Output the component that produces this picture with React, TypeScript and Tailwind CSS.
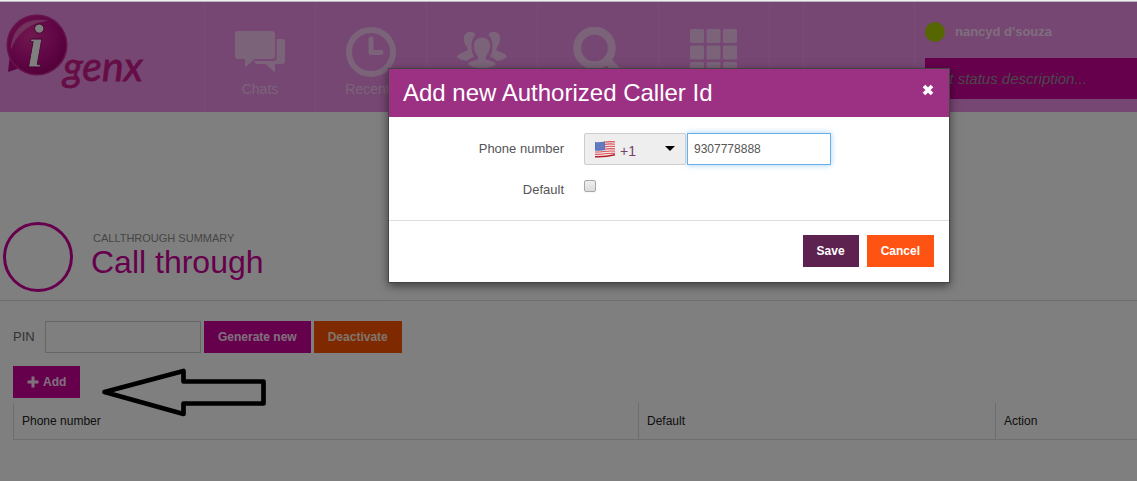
import React, { useState } from "react";

function Logo() {
  return (
    <svg className="block h-[90px] w-[150px] overflow-visible" viewBox="0 0 150 90" role="img" aria-label="i genx">
      <defs>
        <radialGradient id="bubble" cx="0.4" cy="0.35" r="0.7">
          <stop offset="0" stopColor="#e0309c" />
          <stop offset="0.6" stopColor="#c20c8c" />
          <stop offset="1" stopColor="#9e0070" />
        </radialGradient>
      </defs>
      <path d="M2 60 L4 42 A30 30 0 0 1 20 54 Z" fill="#b80a86" />
      <circle cx="31" cy="33" r="29.800" fill="url(#bubble)" stroke="#d02698" strokeWidth="1.500" />
      <path d="M5 38 C5 16 22 4 43 9 C26 10 12 19 5 38Z" fill="#f4a0d8" opacity="0.55" />
      <text x="21" y="55" fontFamily="Liberation Serif, serif" fontSize="62" fontWeight="700" fontStyle="italic" fill="#fff" stroke="#8a0064" strokeWidth="0.800">i</text>
      <text x="57" y="69" fontFamily="Lato, sans-serif" fontSize="41" fontWeight="400" fontStyle="italic" fill="#cc1a8c" stroke="#cc1a8c" strokeWidth="0.800">genx</text>
    </svg>
  );
}

function ChatsIcon() {
  return (
    <svg className="h-[50px] w-[50px]" viewBox="0 0 50 50" fill="currentColor" aria-hidden="true">
      <path d="M3 4H37Q40 4 40 7V29Q40 32 37 32H20L10 40.500V32H3Q0 32 0 29V7Q0 4 3 4Z" />
      <path d="M41.700 12H47Q50 12 50 15V34Q50 37 47 37H40V45.500L30.500 37H22Q19.500 36.500 19.500 34H38.500Q41.700 34 41.700 31Z" />
    </svg>
  );
}

function ClockIcon() {
  return (
    <svg className="h-[50px] w-[50px]" viewBox="0 0 50 50" fill="none" stroke="currentColor" aria-hidden="true">
      <circle cx="25" cy="25" r="22" strokeWidth="6" />
      <path d="M25 12V25.500H35" strokeWidth="5" strokeLinecap="round" strokeLinejoin="round" />
    </svg>
  );
}

function PeopleIcon() {
  const side =
    "M18.500 8C17 4.500 13 4 9.500 6C6 8 6.500 14 8.500 18C9.500 20 11 21 10.500 23C8 25 2 25.500 0 29.500C2 33 7 33.500 10 34C12 32 14.500 31 17 29.500C15 26 14.500 23 14.500 19C14.500 14 16 10 18.500 8Z";
  return (
    <svg className="h-[50px] w-[50px]" viewBox="0 0 50 50" fill="currentColor" aria-hidden="true">
      <path d="M25 10.500C30 10.500 33 14 33 19C33 23.500 30.500 27.500 29 29V32.500C34 34 38 34.500 39 37C36 42.500 14 42.500 11 37C12 34.500 16 34 21 32.500V29C19 27.500 17 23.500 17 19C17 14 20 10.500 25 10.500Z" />
      <path d={side} />
      <path d={side} transform="translate(50 0) scale(-1 1)" />
    </svg>
  );
}

function SearchIcon() {
  return (
    <svg className="h-[50px] w-[50px]" viewBox="0 0 50 50" fill="none" stroke="currentColor" aria-hidden="true">
      <circle cx="21.500" cy="21" r="17.300" strokeWidth="8" />
      <path d="M33.500 33L47 46.500" strokeWidth="8" />
    </svg>
  );
}

function KeypadIcon() {
  const at = [1, 17.5, 34];
  return (
    <svg className="h-[50px] w-[50px]" viewBox="0 0 50 50" fill="currentColor" aria-hidden="true">
      {at.map((y) => at.map((x) => <rect key={`${x}-${y}`} x={x} y={y + 1} width="14" height="14" rx="1.500" />))}
    </svg>
  );
}

function Flag() {
  return (
    <svg className="pointer-events-none absolute left-[11px] top-2 h-[17px] w-5" viewBox="0 0 20 17" aria-hidden="true">
      <path d="M0 1C6 2 12 -1 20 0.500V14C13 17 6 16 0 16.500Z" fill="#f4e6e6" />
      <g fill="none" stroke="#d8545a" strokeWidth="1.100">
        <path d="M9 1.200C13 0.500 16 0.300 20 0.900" />
        <path d="M9 3.500C13 2.800 16 2.600 20 3.200" />
        <path d="M9 5.900C13 5.200 16 5 20 5.500" />
        <path d="M9 8.200C13 7.500 16 7.300 20 7.900" />
        <path d="M0 11C7 11.500 12 9.200 20 10.200" />
        <path d="M0 13.300C7 13.800 12 11.600 20 12.400" />
      </g>
      <path d="M0 15.700C6 16 13 15.500 20 13.800" fill="none" stroke="#b11f28" strokeWidth="1.600" />
      <path d="M0 1C4 1.500 7 1 10 0.500V9C7 9.600 4 9.900 0 9.500Z" fill="#5a73ba" />
      <path d="M1.500 3H9M1.500 5H9M1.500 7H9" stroke="#93a4d6" strokeWidth="0.700" strokeDasharray="1 1" />
    </svg>
  );
}

type NavItemProps = { name: string; icon: React.ReactNode; label?: string; wide?: boolean };

function NavItem({ name, icon, label, wide }: NavItemProps) {
  return (
    <a
      href="#"
      aria-label={name}
      className={`flex shrink-0 flex-col items-center border-l border-[#f09cea] pt-[25px] text-sm text-[#f6c6f2] ${wide ? "w-[121px]" : "w-[111px]"}`}
    >
      {icon}
      {label && <span className="mt-0.5">{label}</span>}
    </a>
  );
}

function Header() {
  return (
    <header className="flex h-[110px] bg-[#ec8ee6]">
      <div className="w-[204px] shrink-0 pl-1.5 pt-2.5">
        <Logo />
      </div>
      <nav className="flex shrink-0">
        <NavItem name="Chats" label="Chats" icon={<ChatsIcon />} />
        <NavItem name="Recents" label="Recents" icon={<ClockIcon />} />
        <NavItem name="Contacts" icon={<PeopleIcon />} />
        <NavItem name="Search" icon={<SearchIcon />} wide />
        <NavItem name="Dialpad" icon={<KeypadIcon />} />
      </nav>
      <div className="w-[34px] shrink-0 border-l border-[#f09cea]" />
      <div className="w-[111px] shrink-0 border-l border-[#f09cea]" />
      <div className="min-w-0 grow border-l border-[#f09cea] pl-2.5 pt-5">
        <div className="flex items-center gap-2.5 text-[13px] leading-5 font-bold text-[#ffdcfc]">
          <span className="size-5 rounded-full bg-[#accc00]" />
          nancyd d'souza
        </div>
        <input
          aria-label="Status"
          placeholder="Set status description..."
          className="mt-4 block h-[41px] w-full bg-[#cc009a] px-1.5 text-[15px] italic placeholder:text-[#989098]"
        />
      </div>
    </header>
  );
}

const button = "flex h-8 items-center px-3.5 text-xs font-bold";

function Summary() {
  return (
    <section className="flex h-[189px] items-end border-b border-[#dcdcdc] pb-2 pl-[3px]">
      <div className="size-[70px] shrink-0 rounded-full border-[3px] border-[#cc009a]" />
      <div className="pb-3 pl-[18px]">
        <p className="pl-0.5 text-[11px] leading-3 text-[#8c8c8c]">CALLTHROUGH SUMMARY</p>
        <h1 className="text-[32px] leading-9 text-[#cc009a]">Call through</h1>
      </div>
    </section>
  );
}

function CallThrough() {
  return (
    <section className="relative pl-[13px] pt-5">
      <div className="flex items-center gap-[3px] text-[13px] text-[#666]">
        <label htmlFor="pin" className="w-[29px]">PIN</label>
        <input id="pin" className="h-8 w-[156px] border border-[#ccc] bg-white px-2" />
        <button type="button" className={`${button} bg-[#cc009a] text-[#ffe0f8]`}>Generate new</button>
        <button type="button" className={`${button} bg-[#ff5200] text-[#ffe8dc]`}>Deactivate</button>
      </div>
      <button type="button" className={`${button} mt-[13px] gap-1 bg-[#cc009a] text-[#ffe0f8]`}>
        <svg className="size-3" viewBox="0 0 12 12" aria-hidden="true">
          <path d="M6 0.500V11.500M0.500 6H11.500" stroke="currentColor" strokeWidth="3" />
        </svg>
        Add
      </button>
      <table className="mt-[5px] w-full table-fixed border-b border-[#dcdcdc] text-left text-xs text-[#222]">
        <colgroup>
          <col className="w-[625px]" />
          <col className="w-[357px]" />
          <col />
        </colgroup>
        <thead>
          <tr className="h-9">
            <th className="border-l border-[#dcdcdc] px-2 font-normal">Phone number</th>
            <th className="border-l border-[#dcdcdc] px-2 font-normal">Default</th>
            <th className="border-l border-[#dcdcdc] px-2 font-normal">Action</th>
          </tr>
        </thead>
      </table>
    </section>
  );
}

function ArrowMark() {
  return (
    <svg className="absolute left-[100px] top-[363px] h-[54px] w-[168px]" viewBox="0 0 168 54" aria-hidden="true">
      <path d="M4.500 27L83.500 6V16.500H163.500V38.500H83.500V49Z" fill="none" stroke="#000" strokeWidth="4.700" strokeLinejoin="round" />
    </svg>
  );
}

function CallerDialog() {
  const [phone, setPhone] = useState("9307778888");
  return (
    <form
      role="dialog"
      aria-labelledby="dialog-title"
      className="absolute left-[388px] top-[66px] w-[562px] border border-[#444] bg-white text-[13px] text-[#555] shadow-[0_3px_9px_rgba(0,0,0,0.5)]"
    >
      <div className="flex h-12 items-center justify-between bg-[#9c3083] pl-3.5 pr-[15px] text-white">
        <h2 id="dialog-title" className="text-2xl">Add new Authorized Caller Id</h2>
        <button type="button" aria-label="Close" className="-mt-1.5">
          <svg className="size-3" viewBox="0 0 12 12" aria-hidden="true">
            <path d="M2 2L10 10M10 2L2 10" stroke="currentColor" strokeWidth="3.800" />
          </svg>
        </button>
      </div>
      <div className="grid grid-cols-[175px_1fr] gap-x-5 gap-y-3 pb-[17px] pt-4">
        <label htmlFor="phone" className="text-right leading-8">Phone number</label>
        <div className="flex gap-px">
          <div className="relative">
            <Flag />
            <select
              aria-label="Country code"
              className="h-8 w-[102px] appearance-none rounded-xs border border-[#ccc] bg-[#eee] pb-0 pl-[35px] pt-1 text-sm text-[#73406a]"
            >
              <option>+1</option>
              <option>+44</option>
              <option>+91</option>
            </select>
            <svg className="pointer-events-none absolute right-[11px] top-[13px] h-[5px] w-2.5" viewBox="0 0 10 5" aria-hidden="true">
              <path d="M0 0H10L5 5Z" fill="#000" />
            </svg>
          </div>
          <input
            id="phone"
            type="tel"
            value={phone}
            onChange={(e) => setPhone(e.target.value)}
            className="h-8 w-36 border border-[#66afe9] px-1.5 text-xs shadow-[0_0_6px_rgba(102,175,233,0.6)] outline-none"
          />
        </div>
        <label htmlFor="default" className="text-right leading-[26px]">Default</label>
        <input
          id="default"
          type="checkbox"
          className="mt-[3px] size-3 appearance-none rounded-xs border border-[#a8a8a8] bg-linear-to-b from-[#eee] to-[#dcdcdc] shadow-xs checked:bg-[#5e2250]"
        />
      </div>
      <div className="flex justify-end gap-2 border-t border-[#ddd] px-[15px] pb-[15px] pt-3.5 text-white">
        <button type="submit" className={`${button} bg-[#5e2250]`}>Save</button>
        <button type="button" className={`${button} bg-[#ff5314]`}>Cancel</button>
      </div>
    </form>
  );
}

export default function App() {
  return (
    <div className="flex min-h-screen flex-col font-['Liberation_Sans',Arial,sans-serif]">
      <div className="h-0.5 shrink-0 border-b border-[#b8b4b8] bg-[#f0f0f0]" />
      <div className="relative grow overflow-hidden bg-white">
        <Header />
        <main>
          <Summary />
          <CallThrough />
        </main>
        <div className="absolute inset-0 bg-black/50" />
        <ArrowMark />
        <CallerDialog />
      </div>
    </div>
  );
}
